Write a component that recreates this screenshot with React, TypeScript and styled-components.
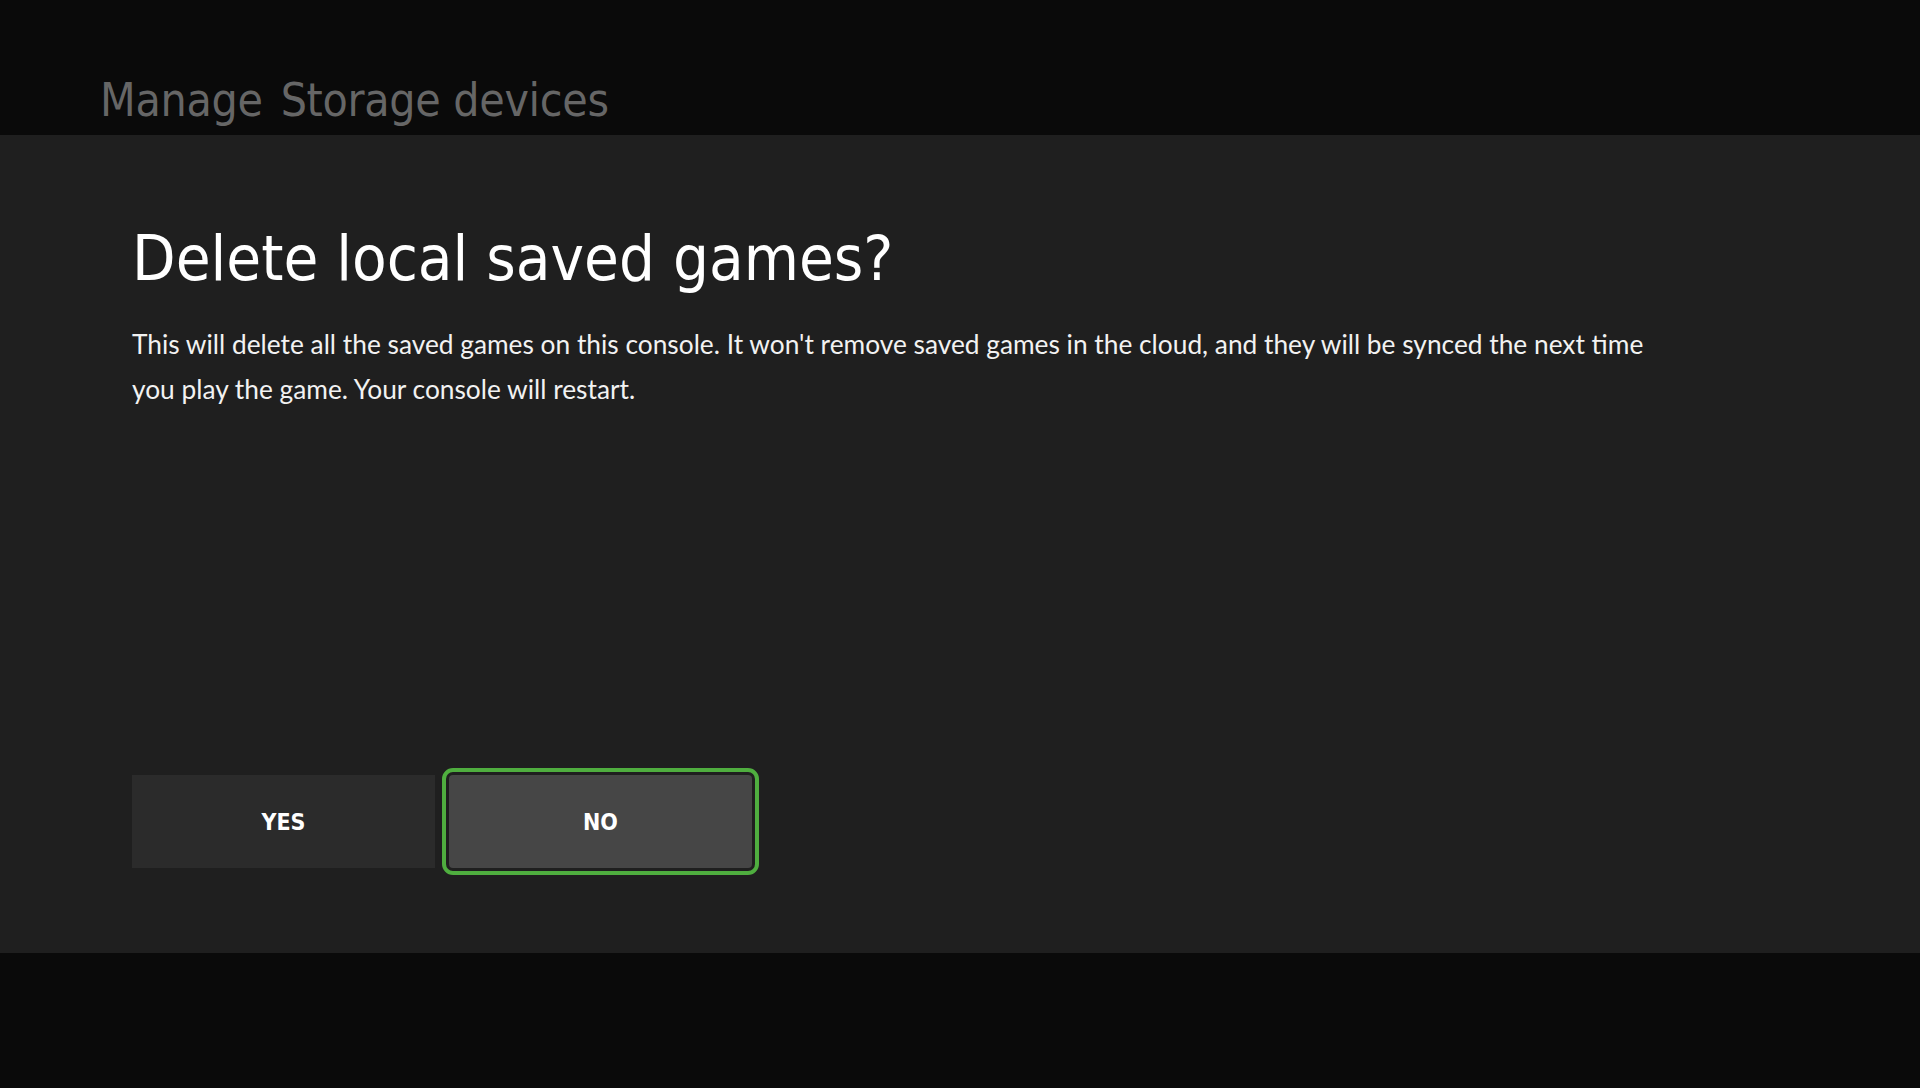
import React from 'react';
import styled, { createGlobalStyle } from 'styled-components';

const GlobalStyle = createGlobalStyle`
  html, body {
    margin: 0;
    padding: 0;
    background: #0a0a0a;
  }
  * {
    box-sizing: border-box;
  }
`;

const Page = styled.div`
  width: 1920px;
  height: 1088px;
  display: flex;
  flex-direction: column;
  background: #0a0a0a;
  font-family: 'DejaVu Sans Condensed', 'DejaVu Sans', sans-serif;
  overflow: hidden;
`;

const Header = styled.header`
  height: 135px;
  flex: none;
  display: flex;
  align-items: flex-end;
  gap: 18px;
  padding: 0 0 12px 100px;
`;

const Crumb = styled.span`
  font-size: 46px;
  line-height: 1;
  color: #666666;
  letter-spacing: -0.3px;
`;

const Panel = styled.main`
  height: 818px;
  flex: none;
  background: #1f1f1f;
  padding: 85px 0 0 132px;
  display: flex;
  flex-direction: column;
`;

const Title = styled.h1`
  margin: 0;
  font-size: 63px;
  font-weight: 400;
  line-height: 78px;
  color: #ffffff;
`;

const Body = styled.p`
  margin: 24px 0 0;
  width: 1540px;
  font-family: 'Lato', sans-serif;
  font-size: 26.3px;
  line-height: 45px;
  color: #f2f2f2;
`;

const Actions = styled.div`
  margin-top: auto;
  margin-bottom: 85px;
  display: flex;
  gap: 14px;
`;

const Button = styled.button<{ $focused?: boolean }>`
  width: 303px;
  height: 93px;
  border: none;
  border-radius: ${({ $focused }) => ($focused ? '4px' : '0')};
  background: ${({ $focused }) => ($focused ? '#464646' : '#2b2b2b')};
  color: #ffffff;
  font-family: 'DejaVu Sans Condensed', 'DejaVu Sans', sans-serif;
  font-weight: 700;
  font-size: 23px;
  outline: ${({ $focused }) => ($focused ? '4px solid #4fae3f' : 'none')};
  outline-offset: 3px;
  cursor: pointer;
`;

export default function App() {
  return (
    <>
      <GlobalStyle />
      <Page>
        <Header>
          <Crumb>Manage</Crumb>
          <Crumb>Storage devices</Crumb>
        </Header>
        <Panel>
          <Title>Delete local saved games?</Title>
          <Body>
            This will delete all the saved games on this console. It won't remove saved games in
            the cloud, and they will be synced the next time you play the game. Your console will
            restart.
          </Body>
          <Actions>
            <Button>YES</Button>
            <Button $focused>NO</Button>
          </Actions>
        </Panel>
      </Page>
    </>
  );
}
